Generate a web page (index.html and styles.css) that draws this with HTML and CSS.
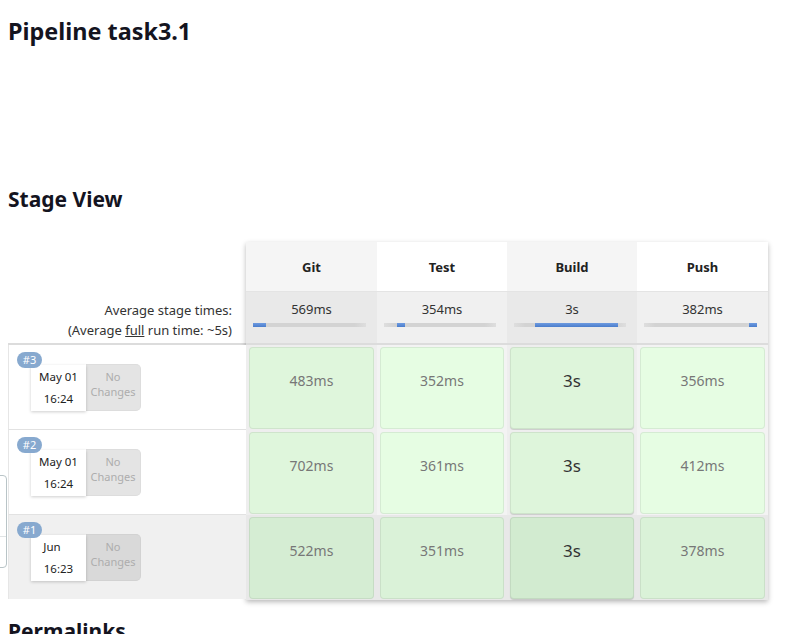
FILE: index.html
```html
<!DOCTYPE html>
<html>
<head>
<meta charset="utf-8">
<link rel="stylesheet" href="styles.css">
</head>
<body>
<h1 class="title">Pipeline task3.1</h1>
<h2 class="sub">Stage View</h2>
<div class="stage-view">
  <div class="left">
    <div class="l-head"></div>
    <div class="l-avg">Average stage times:<br>(Average <u>full</u> run time: ~5s)</div>
    <div class="l-row">
      <span class="badge">#3</span>
      <div class="date"><div>May 01</div><div>16:24</div></div>
      <div class="changes">No<br>Changes</div>
    </div>
    <div class="l-row">
      <span class="badge">#2</span>
      <div class="date"><div>May 01</div><div>16:24</div></div>
      <div class="changes">No<br>Changes</div>
    </div>
    <div class="l-row hover">
      <span class="badge">#1</span>
      <div class="date"><div><span class="jun">Jun</span></div><div>16:23</div></div>
      <div class="changes">No<br>Changes</div>
    </div>
  </div>
  <div class="stages">
    <div class="col odd w131">
      <div class="s-head">Git</div>
      <div class="s-avg">569ms<div class="bar"><div class="fill" style="margin-left:0;width:13px"></div></div></div>
      <div class="s-cell"><div class="box">483ms</div></div>
      <div class="s-cell"><div class="box">702ms</div></div>
      <div class="s-cell hover"><div class="box">522ms</div></div>
    </div>
    <div class="col even w130">
      <div class="s-head">Test</div>
      <div class="s-avg">354ms<div class="bar"><div class="fill" style="margin-left:13px;width:8px"></div></div></div>
      <div class="s-cell"><div class="box">352ms</div></div>
      <div class="s-cell"><div class="box">361ms</div></div>
      <div class="s-cell hover"><div class="box">351ms</div></div>
    </div>
    <div class="col odd w130 long">
      <div class="s-head">Build</div>
      <div class="s-avg">3s<div class="bar"><div class="fill" style="margin-left:21px;width:83px"></div></div></div>
      <div class="s-cell"><div class="box">3s</div></div>
      <div class="s-cell"><div class="box">3s</div></div>
      <div class="s-cell hover"><div class="box">3s</div></div>
    </div>
    <div class="col even w131">
      <div class="s-head">Push</div>
      <div class="s-avg">382ms<div class="bar"><div class="fill" style="margin-left:105px;width:8px"></div></div></div>
      <div class="s-cell"><div class="box">356ms</div></div>
      <div class="s-cell"><div class="box">412ms</div></div>
      <div class="s-cell hover"><div class="box">378ms</div></div>
    </div>
  </div>
</div>
<h2 class="perma">Permalinks</h2>
<div class="side-panel"><div class="sp-top"></div><div class="sp-bot"></div></div>
</body>
</html>
```
FILE: styles.css
```css
html, body {
  margin: 0;
  padding: 0;
  background: #fff;
}
body {
  margin: 0 8px;
  font-family: "Noto Sans", "Open Sans", sans-serif;
  color: #14141f;
  overflow: hidden;
  height: 634px;
}
.title {
  font-size: 23.4px;
  line-height: 32px;
  font-weight: 700;
  margin: 15px 0 0;
}
.sub {
  font-size: 21px;
  line-height: 28px;
  font-weight: 700;
  margin: 138px 0 29px;
}
.stage-view {
  display: flex;
  align-items: flex-start;
}
.left {
  width: 238px;
  display: flex;
  flex-direction: column;
  font-size: 13px;
  color: #333;
}
.l-head {
  height: 50px;
}
.l-avg {
  box-sizing: border-box;
  padding: 8px 14px 0 0;
  line-height: 20px;
  text-align: right;
  border-bottom: 2px solid #dcdcdc;
  height: 53px;
}
.l-avg u {
  text-decoration-thickness: 1px;
}
.l-row {
  position: relative;
  height: 85px;
  box-sizing: border-box;
  border-left: 1px solid #e6e6e6;
  border-bottom: 1px solid #e2e2e2;
  padding: 20px 0 0 22px;
  display: flex;
  align-items: flex-start;
  background: #fff;
}
.l-row.hover {
  background: #f0f0f0;
  border-bottom: none;
  height: 84px;
}
.badge {
  position: absolute;
  left: 8px;
  top: 7px;
  width: 25px;
  height: 16px;
  border-radius: 8px;
  background: #87a9cf;
  color: #fff;
  font-size: 11px;
  line-height: 16px;
  text-align: center;
  z-index: 2;
}
.date {
  width: 55px;
  height: 46px;
  box-sizing: border-box;
  background: #fff;
  box-shadow: 0 1px 3px rgba(0, 0, 0, 0.2);
  padding-top: 1px;
  font-size: 11.5px;
  line-height: 22px;
  text-align: center;
  color: #222;
  position: relative;
  z-index: 1;
}
.jun {
  margin-right: 13px;
}
.changes {
  width: 55px;
  height: 47px;
  margin-top: -1px;
  box-sizing: border-box;
  background: #e4e4e4;
  border: 1px solid #dddddd;
  border-left: none;
  border-radius: 0 5px 5px 0;
  padding-top: 4px;
  font-size: 11px;
  line-height: 15px;
  text-align: center;
  color: #adadad;
}
.l-row.hover .changes {
  background: #d9d9d9;
  border-color: #d2d2d2;
}
.stages {
  display: flex;
  box-shadow: 0 2px 5px rgba(0, 0, 0, 0.28);
}
.col {
  display: flex;
  flex-direction: column;
}
.w131 { width: 131px; }
.w130 { width: 130px; }
.s-head {
  height: 50px;
  display: flex;
  align-items: center;
  justify-content: center;
  font-size: 13px;
  font-weight: 700;
  color: #222;
  border-bottom: 1px solid #e4e4e4;
  box-sizing: border-box;
}
.odd .s-head { background: #f5f5f5; }
.even .s-head { background: #fff; }
.s-avg {
  height: 53px;
  box-sizing: border-box;
  padding-top: 7px;
  line-height: 20px;
  font-size: 13px;
  color: #333;
  text-align: center;
  border-bottom: 2px solid #dcdcdc;
}
.odd .s-avg { background: #e9e9e9; }
.even .s-avg { background: #f0f0f0; }
.bar {
  margin: 4px 11px 0 7px;
  height: 4px;
  background: linear-gradient(to right, #dedede, #d3d3d3 10%, #d3d3d3 90%, #dedede);
  display: flex;
}
.fill {
  height: 4px;
  background: linear-gradient(#6e9be0, #4a7dcc);
}
.s-cell {
  height: 85px;
  box-sizing: border-box;
  padding: 2px 3px 1px;
}
.odd .s-cell { background: #eeeeee; }
.even .s-cell { background: #f3f3f3; }
.s-cell.hover { background: #e8e8e8; }
.box {
  height: 100%;
  box-sizing: border-box;
  border: 1px solid rgba(0, 0, 0, 0.07);
  border-radius: 4px;
  padding-top: 23px;
  text-align: center;
  font-size: 14px;
  line-height: 20px;
  color: #777;
}
.odd .box { background: #dff6dc; }
.even .box { background: #e6fde3; }
.long .box {
  background: #def5db;
  font-size: 17px;
  color: #333;
  box-shadow: 0 1px 1px rgba(0, 0, 0, 0.15);
}
.odd .hover .box { background: #d5edd3; }
.even .hover .box { background: #daf2d8; }
.long .hover .box { background: #d2ebd0; }
.perma {
  font-size: 21px;
  line-height: 28px;
  font-weight: 700;
  margin: 17px 0 0;
}
.side-panel {
  position: absolute;
  left: -100px;
  top: 475px;
  width: 107px;
  height: 93px;
  box-sizing: border-box;
  border: 1px solid #b9c4c7;
  border-radius: 4px;
  background: #fff;
  display: flex;
  flex-direction: column;
}
.sp-top {
  height: 60px;
  border-bottom: 1px solid #e0e4e5;
}
```
